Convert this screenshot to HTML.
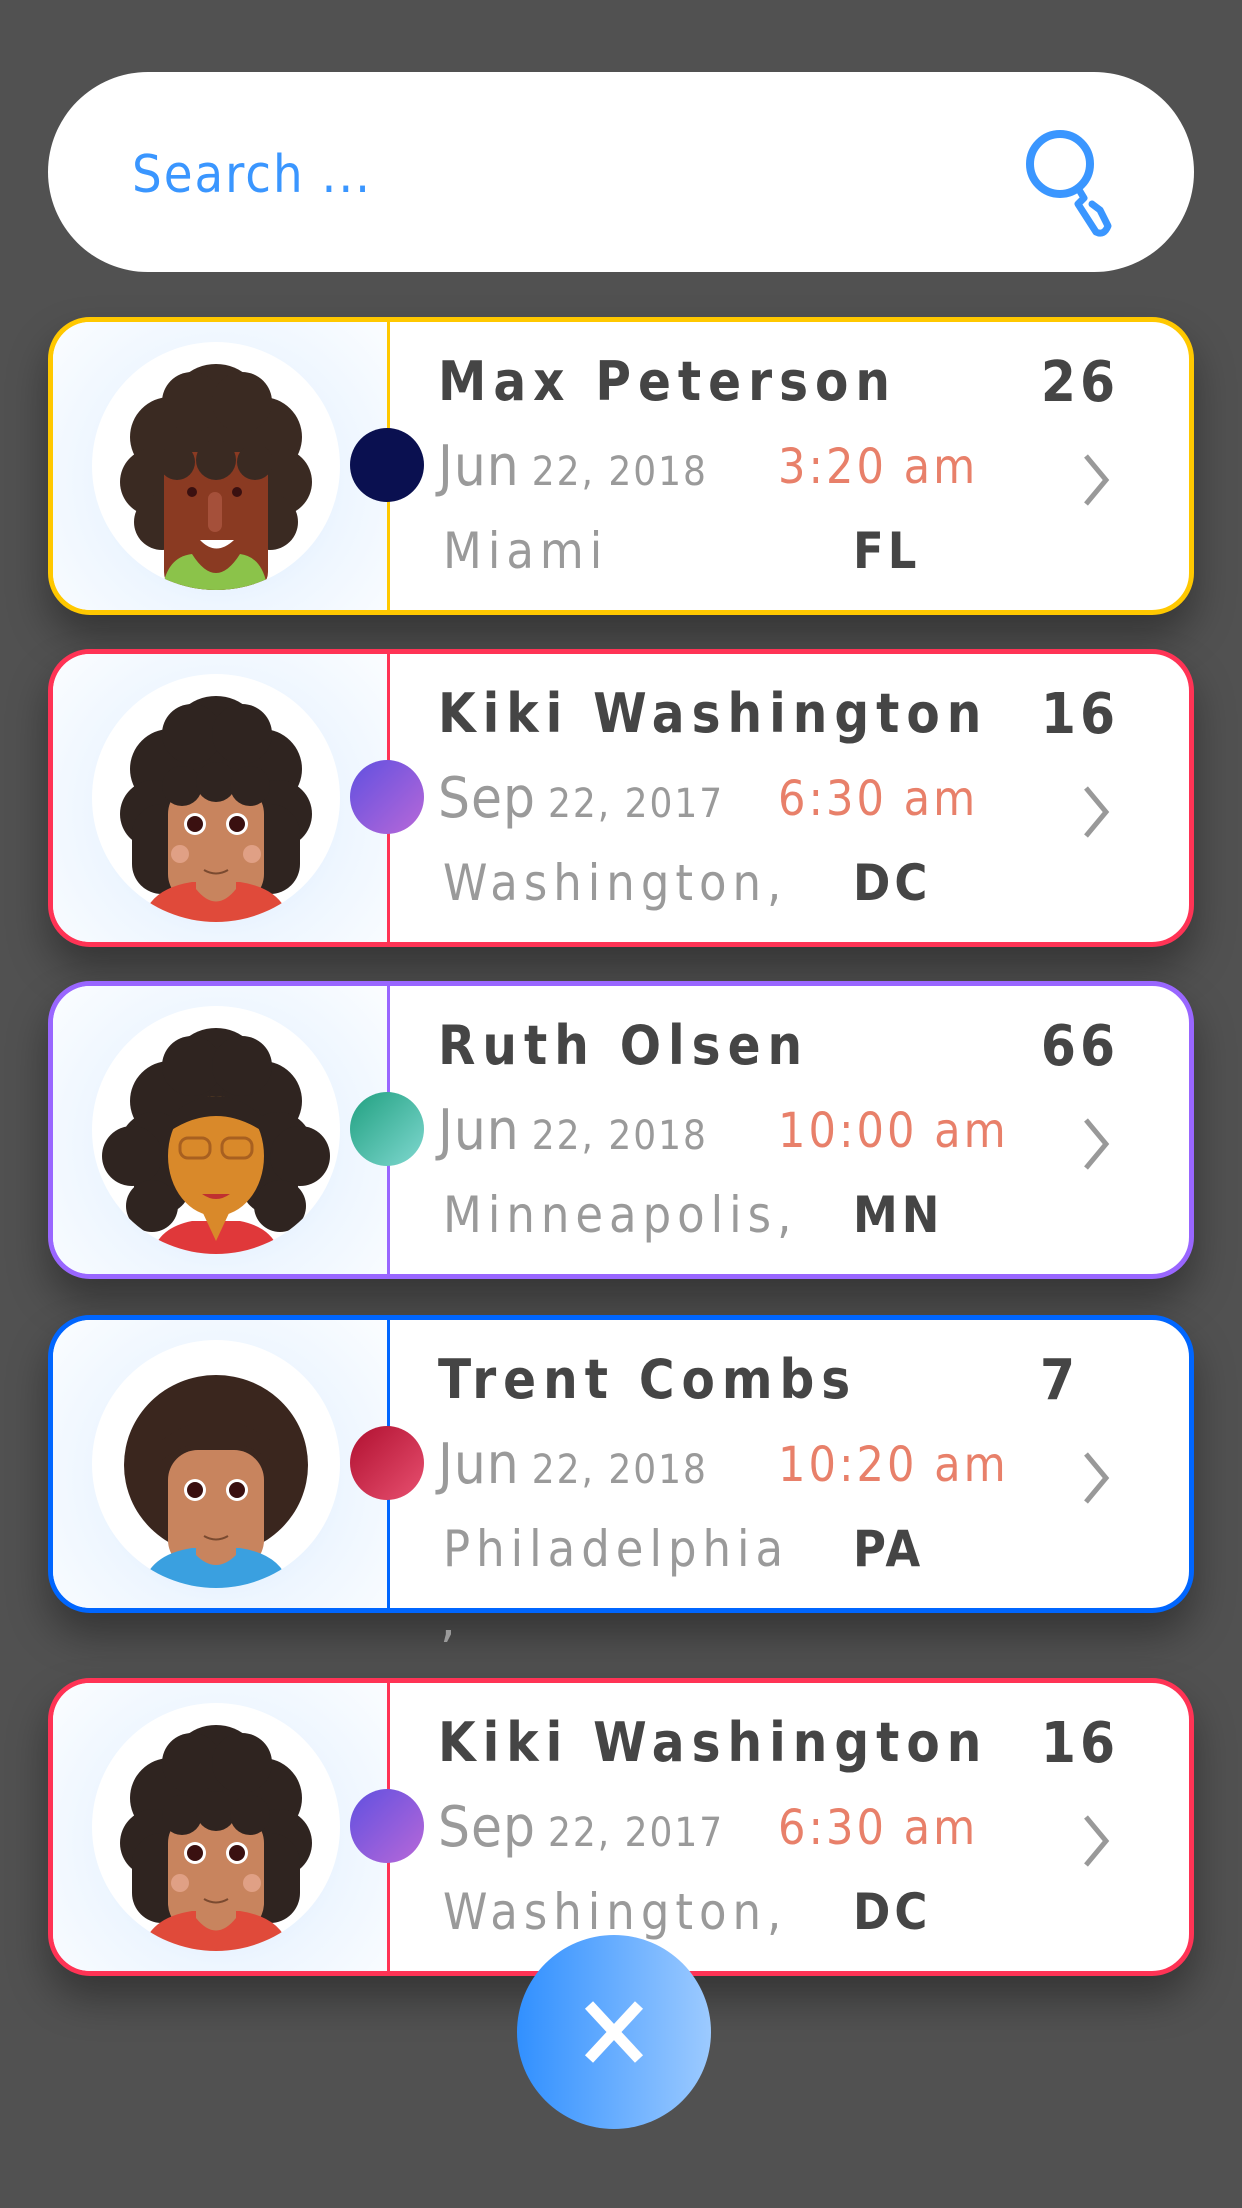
<!DOCTYPE html>
<html><head><meta charset="utf-8"><style>
*{margin:0;padding:0;box-sizing:border-box}
body{width:1242px;height:2208px;background:#515151;position:relative;overflow:hidden;font-family:"DejaVu Sans","Liberation Sans",sans-serif}
.search{position:absolute;left:48px;top:72px;width:1146px;height:200px;background:#fff;border-radius:100px}
.search .t{position:absolute;left:84px;top:73px;font-size:52px;color:#3a96ff;font-family:"DejaVu Sans Condensed","DejaVu Sans",sans-serif;letter-spacing:2px;line-height:60px}
.card{position:absolute;left:48px;width:1146px;height:298px;background:#fff;border-radius:42px;border:5px solid;box-shadow:0 22px 40px rgba(0,0,0,.35);overflow:visible}
.left{position:absolute;left:0;top:0;width:337px;height:288px;border-radius:37px 0 0 37px;background:radial-gradient(circle at 50% 55%,#cfe5ff 0%,#eef6ff 55%,#fbfdff 100%);border-right:3px solid}
.av{position:absolute;left:39px;top:20px;width:248px;height:248px;border-radius:50%;background:#fff;overflow:hidden}
.dot{position:absolute;left:297px;top:106px;width:74px;height:74px;border-radius:50%}
.name{position:absolute;left:385px;top:28px;font-size:54px;font-weight:bold;color:#454545;letter-spacing:7px;font-family:"DejaVu Sans Condensed","DejaVu Sans",sans-serif}
.num{position:absolute;right:70px;top:28px;font-size:56px;font-weight:bold;color:#454545;letter-spacing:4px;font-family:"DejaVu Sans Condensed","DejaVu Sans",sans-serif}
.date{position:absolute;left:385px;top:112px;color:#9a9a9a;font-family:"DejaVu Sans Condensed","DejaVu Sans",sans-serif;white-space:nowrap}
.date .m{font-size:56px;letter-spacing:1px}
.date .d{font-size:40px;letter-spacing:2px;margin-left:12px}
.time{position:absolute;top:117px;font-size:48px;color:#e8806a;letter-spacing:3px;font-family:"DejaVu Sans Condensed","DejaVu Sans",sans-serif}
.city{position:absolute;left:390px;top:200px;font-size:50px;color:#9a9a9a;letter-spacing:6px;font-family:"DejaVu Sans Condensed","DejaVu Sans",sans-serif}
.st{position:absolute;top:200px;font-size:50px;color:#454545;font-weight:bold;letter-spacing:4px;font-family:"DejaVu Sans Condensed","DejaVu Sans",sans-serif}
.chev{position:absolute;left:1023px;top:128px}
.close{position:absolute;left:517px;top:1935px;width:194px;height:194px;border-radius:50%;background:linear-gradient(90deg,#3190ff,#9ccaff)}
</style></head><body>

<div class="search"><div class="t">Search ...</div>
<svg style="position:absolute;left:960px;top:42px" width="120" height="130" viewBox="0 0 120 130">
<circle cx="52" cy="50" r="30" fill="none" stroke="#3a96ff" stroke-width="8"/>
<path d="M70 74 L76 84 L70 90 L88 118 Q96 122 100 112 L92 96 L84 90" fill="none" stroke="#3a96ff" stroke-width="7" stroke-linejoin="round" stroke-linecap="round"/>
</svg></div>

<svg width="0" height="0" style="position:absolute">
<defs>
<g id="hair"><circle cx="124" cy="70" r="48"/><circle cx="78" cy="95" r="40"/><circle cx="170" cy="95" r="40"/><circle cx="62" cy="140" r="34"/><circle cx="186" cy="140" r="34"/><circle cx="70" cy="180" r="28"/><circle cx="178" cy="180" r="28"/><circle cx="100" cy="60" r="30"/><circle cx="150" cy="60" r="30"/></g>
</defs>
</svg>

<!-- Card 1 -->
<div class="card" style="top:317px;border-color:#ffc800">
<div class="left" style="border-right-color:#ffc800"><div class="av">
<svg width="248" height="248"><g fill="#3a2a22"><use href="#hair"/></g>
<rect x="72" y="110" width="104" height="140" rx="20" fill="#8a3a22"/>
<rect x="86" y="190" width="76" height="70" fill="#8a3a22"/>
<path d="M70 250 Q74 215 100 212 L148 212 Q172 215 176 250Z" fill="#8bc34a"/>
<path d="M100 212 Q124 250 148 212Z" fill="#8a3a22"/>
<circle cx="100" cy="150" r="5" fill="#3a1010"/><circle cx="145" cy="150" r="5" fill="#3a1010"/>
<rect x="116" y="150" width="14" height="40" rx="7" fill="#a5503a"/>
<path d="M108 198 Q124 215 142 198Z" fill="#fff"/>
<g fill="#3a2a22"><circle cx="85" cy="120" r="18"/><circle cx="124" cy="118" r="20"/><circle cx="163" cy="120" r="18"/></g>
</svg></div></div>
<div class="dot" style="background:#0a1050"></div>
<div class="name">Max Peterson</div><div class="num">26</div>
<div class="date"><span class="m">Jun</span><span class="d">22, 2018</span></div>
<div class="time" style="left:725px">3:20 am</div>
<div class="city">Miami</div><div class="st" style="left:800px">FL</div>
<svg class="chev" width="40" height="60"><path d="M10 6 L30 30 L10 54" fill="none" stroke="#999" stroke-width="5"/></svg>
</div>

<!-- Card 2 -->
<div class="card" style="top:649px;border-color:#ff3355">
<div class="left" style="border-right-color:#ff3355"><div class="av">
<svg width="248" height="248"><g fill="#2f2420"><use href="#hair"/><rect x="40" y="130" width="168" height="90" rx="30"/></g>
<rect x="76" y="110" width="96" height="120" rx="30" fill="#c8845e"/>
<path d="M50 250 Q55 215 100 208 L148 208 Q193 215 198 250Z" fill="#e04a3a"/>
<path d="M104 200 L104 215 Q124 240 144 215 L144 200Z" fill="#c8845e"/>
<circle cx="103" cy="150" r="11" fill="#fff"/><circle cx="145" cy="150" r="11" fill="#fff"/>
<circle cx="103" cy="150" r="8" fill="#3a1010"/><circle cx="145" cy="150" r="8" fill="#3a1010"/>
<circle cx="88" cy="180" r="9" fill="#e0a085"/><circle cx="160" cy="180" r="9" fill="#e0a085"/>
<path d="M112 196 Q124 203 136 196" fill="none" stroke="#7a4a30" stroke-width="2"/>
<g fill="#2f2420"><circle cx="90" cy="112" r="20"/><circle cx="124" cy="108" r="20"/><circle cx="158" cy="112" r="20"/></g>
</svg></div></div>
<div class="dot" style="background:linear-gradient(135deg,#6050e0,#b868d8)"></div>
<div class="name">Kiki Washington</div><div class="num">16</div>
<div class="date"><span class="m">Sep</span><span class="d">22, 2017</span></div>
<div class="time" style="left:725px">6:30 am</div>
<div class="city">Washington,</div><div class="st" style="left:800px">DC</div>
<svg class="chev" width="40" height="60"><path d="M10 6 L30 30 L10 54" fill="none" stroke="#999" stroke-width="5"/></svg>
</div>

<!-- Card 3 -->
<div class="card" style="top:981px;border-color:#9966ff">
<div class="left" style="border-right-color:#9966ff"><div class="av">
<svg width="248" height="248"><g fill="#2f2420"><use href="#hair"/><circle cx="40" cy="150" r="30"/><circle cx="208" cy="150" r="30"/><circle cx="60" cy="200" r="26"/><circle cx="188" cy="200" r="26"/></g>
<ellipse cx="124" cy="150" rx="48" ry="60" fill="#d9892a"/>
<path d="M60 250 Q65 222 100 215 L148 215 Q183 222 188 250Z" fill="#e0383a"/>
<path d="M110 205 L124 235 L138 205Z" fill="#d9892a"/>
<rect x="88" y="132" width="30" height="20" rx="8" fill="none" stroke="#a86020" stroke-width="3"/><rect x="130" y="132" width="30" height="20" rx="8" fill="none" stroke="#a86020" stroke-width="3"/>
<path d="M110 188 Q124 198 138 188Z" fill="#c03030"/>
<path d="M78 110 Q124 70 170 110 L170 125 Q124 95 78 125Z" fill="#2f2420"/>
</svg></div></div>
<div class="dot" style="background:linear-gradient(135deg,#20a080,#80d8d0)"></div>
<div class="name">Ruth Olsen</div><div class="num">66</div>
<div class="date"><span class="m">Jun</span><span class="d">22, 2018</span></div>
<div class="time" style="left:725px">10:00 am</div>
<div class="city">Minneapolis,</div><div class="st" style="left:800px">MN</div>
<svg class="chev" width="40" height="60"><path d="M10 6 L30 30 L10 54" fill="none" stroke="#999" stroke-width="5"/></svg>
</div>

<!-- Card 4 -->
<div class="card" style="top:1315px;border-color:#0066ff">
<div class="left" style="border-right-color:#0066ff"><div class="av">
<svg width="248" height="248"><ellipse cx="124" cy="125" rx="92" ry="90" fill="#3a261e"/>
<rect x="76" y="110" width="96" height="120" rx="30" fill="#c8845e"/>
<path d="M50 250 Q55 215 100 208 L148 208 Q193 215 198 250Z" fill="#3aa0e0"/>
<path d="M104 200 L104 215 Q124 235 144 215 L144 200Z" fill="#c8845e"/>
<circle cx="103" cy="150" r="11" fill="#fff"/><circle cx="145" cy="150" r="11" fill="#fff"/>
<circle cx="103" cy="150" r="8" fill="#3a1010"/><circle cx="145" cy="150" r="8" fill="#3a1010"/>
<path d="M112 196 Q124 203 136 196" fill="none" stroke="#7a4a30" stroke-width="2"/>
<path d="M70 120 Q124 80 178 120 L178 100 Q124 60 70 100Z" fill="#3a261e"/>
</svg></div></div>
<div class="dot" style="background:linear-gradient(135deg,#b01030,#e85070)"></div>
<div class="name">Trent Combs</div><div class="num" style="right:110px">7</div>
<div class="date"><span class="m">Jun</span><span class="d">22, 2018</span></div>
<div class="time" style="left:725px">10:20 am</div>
<div class="city">Philadelphia</div><div class="st" style="left:800px">PA</div>
<svg class="chev" width="40" height="60"><path d="M10 6 L30 30 L10 54" fill="none" stroke="#999" stroke-width="5"/></svg>
</div>
<div style="position:absolute;left:440px;top:1590px;font-size:50px;color:#9a9a9a">,</div>

<!-- Card 5 -->
<div class="card" style="top:1678px;border-color:#ff3355">
<div class="left" style="border-right-color:#ff3355"><div class="av">
<svg width="248" height="248"><g fill="#2f2420"><use href="#hair"/><rect x="40" y="130" width="168" height="90" rx="30"/></g>
<rect x="76" y="110" width="96" height="120" rx="30" fill="#c8845e"/>
<path d="M50 250 Q55 215 100 208 L148 208 Q193 215 198 250Z" fill="#e04a3a"/>
<path d="M104 200 L104 215 Q124 240 144 215 L144 200Z" fill="#c8845e"/>
<circle cx="103" cy="150" r="11" fill="#fff"/><circle cx="145" cy="150" r="11" fill="#fff"/>
<circle cx="103" cy="150" r="8" fill="#3a1010"/><circle cx="145" cy="150" r="8" fill="#3a1010"/>
<circle cx="88" cy="180" r="9" fill="#e0a085"/><circle cx="160" cy="180" r="9" fill="#e0a085"/>
<path d="M112 196 Q124 203 136 196" fill="none" stroke="#7a4a30" stroke-width="2"/>
<g fill="#2f2420"><circle cx="90" cy="112" r="20"/><circle cx="124" cy="108" r="20"/><circle cx="158" cy="112" r="20"/></g>
</svg></div></div>
<div class="dot" style="background:linear-gradient(135deg,#6050e0,#b868d8)"></div>
<div class="name">Kiki Washington</div><div class="num">16</div>
<div class="date"><span class="m">Sep</span><span class="d">22, 2017</span></div>
<div class="time" style="left:725px">6:30 am</div>
<div class="city">Washington,</div><div class="st" style="left:800px">DC</div>
<svg class="chev" width="40" height="60"><path d="M10 6 L30 30 L10 54" fill="none" stroke="#999" stroke-width="5"/></svg>
</div>

<div class="close"><svg width="194" height="194"><path d="M72 70 L122 124 M122 70 L72 124" stroke="#fff" stroke-width="11"/></svg></div>
</body></html>
